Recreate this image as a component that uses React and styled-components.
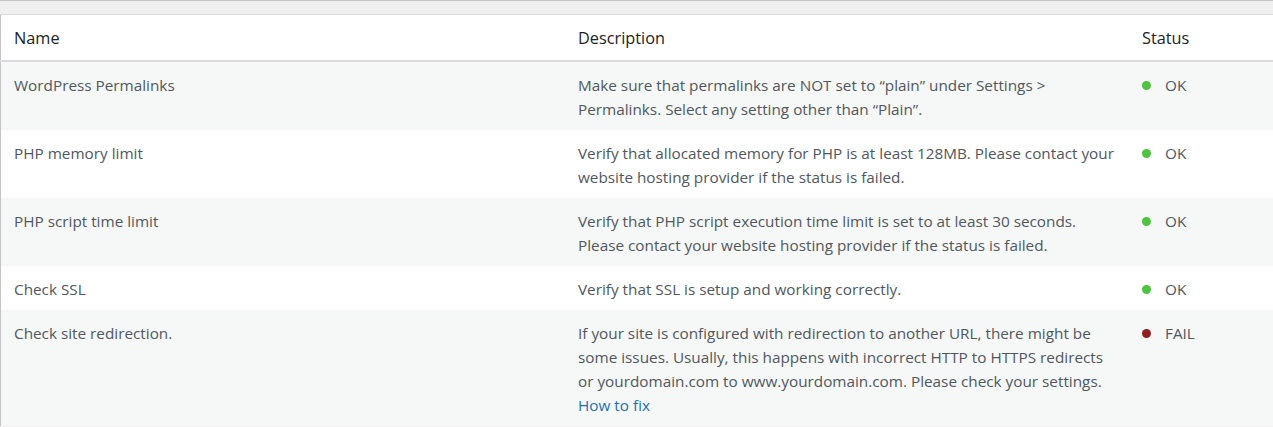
import React from "react";
import styled, { createGlobalStyle } from "styled-components";

const Global = createGlobalStyle`
  html, body { margin: 0; padding: 0; background: #f0f0f1; }
  body { font-family: "Open Sans", "Noto Sans", sans-serif; }
`;

const Page = styled.div`
  border-top: 1px solid #c3c4c7;
  padding-top: 13px;
  height: 426px;
  overflow: hidden;
`;

const Table = styled.table`
  width: 100%;
  border-collapse: collapse;
  table-layout: fixed;
  background: #fff;
  border-top: 1px solid #dcdcde;
  border-left: 1px solid #c3c4c7;
`;

const Th = styled.th`
  text-align: left;
  font-weight: 400;
  font-size: 16.3px;
  line-height: 24px;
  color: #1d2327;
  padding: 11px 14px 10px 13px;
  border-bottom: 2px solid #dcdcde;
  width: ${(p) => p.$w || "auto"};
`;

const Row = styled.tr`
  background: ${(p) => (p.$striped ? "#f6f7f7" : "#fff")};
`;

const Td = styled.td`
  vertical-align: top;
  font-size: 15.3px;
  line-height: 24px;
  color: #50575e;
  padding: 11px 14px 9px 13px;
`;

const Status = styled.div`
  display: flex;
  align-items: center;
  gap: 14px;
  height: 24px;
`;

const Dot = styled.span`
  flex: none;
  width: 9px;
  height: 9px;
  border-radius: 50%;
  background: ${(p) => (p.$ok ? "#4fc23f" : "#8c2121")};
`;

const Link = styled.a`
  color: #2271b1;
  text-decoration: none;
`;

const rows = [
  {
    name: "WordPress Permalinks",
    desc: (
      <>
        Make sure that permalinks are NOT set to “plain” under Settings &gt;
        Permalinks. Select any setting other than “Plain”.
      </>
    ),
    ok: true,
  },
  {
    name: "PHP memory limit",
    desc: "Verify that allocated memory for PHP is at least 128MB. Please contact your website hosting provider if the status is failed.",
    ok: true,
  },
  {
    name: "PHP script time limit",
    desc: "Verify that PHP script execution time limit is set to at least 30 seconds. Please contact your website hosting provider if the status is failed.",
    ok: true,
  },
  {
    name: "Check SSL",
    desc: "Verify that SSL is setup and working correctly.",
    ok: true,
  },
  {
    name: "Check site redirection.",
    desc: (
      <>
        If your site is configured with redirection to another URL, there might
        be some issues. Usually, this happens with incorrect HTTP to HTTPS
        redirects or yourdomain.com to www.yourdomain.com. Please check your
        settings. <Link href="#">How to fix</Link>
      </>
    ),
    ok: false,
  },
];

export default function App() {
  return (
    <>
      <Global />
      <Page>
        <Table>
          <thead>
            <tr>
              <Th $w="537px">Name</Th>
              <Th $w="537px">Description</Th>
              <Th>Status</Th>
            </tr>
          </thead>
          <tbody>
            {rows.map((r, i) => (
              <Row key={i} $striped={i % 2 === 0}>
                <Td>{r.name}</Td>
                <Td>{r.desc}</Td>
                <Td>
                  <Status>
                    <Dot $ok={r.ok} />
                    {r.ok ? "OK" : "FAIL"}
                  </Status>
                </Td>
              </Row>
            ))}
          </tbody>
        </Table>
      </Page>
    </>
  );
}
